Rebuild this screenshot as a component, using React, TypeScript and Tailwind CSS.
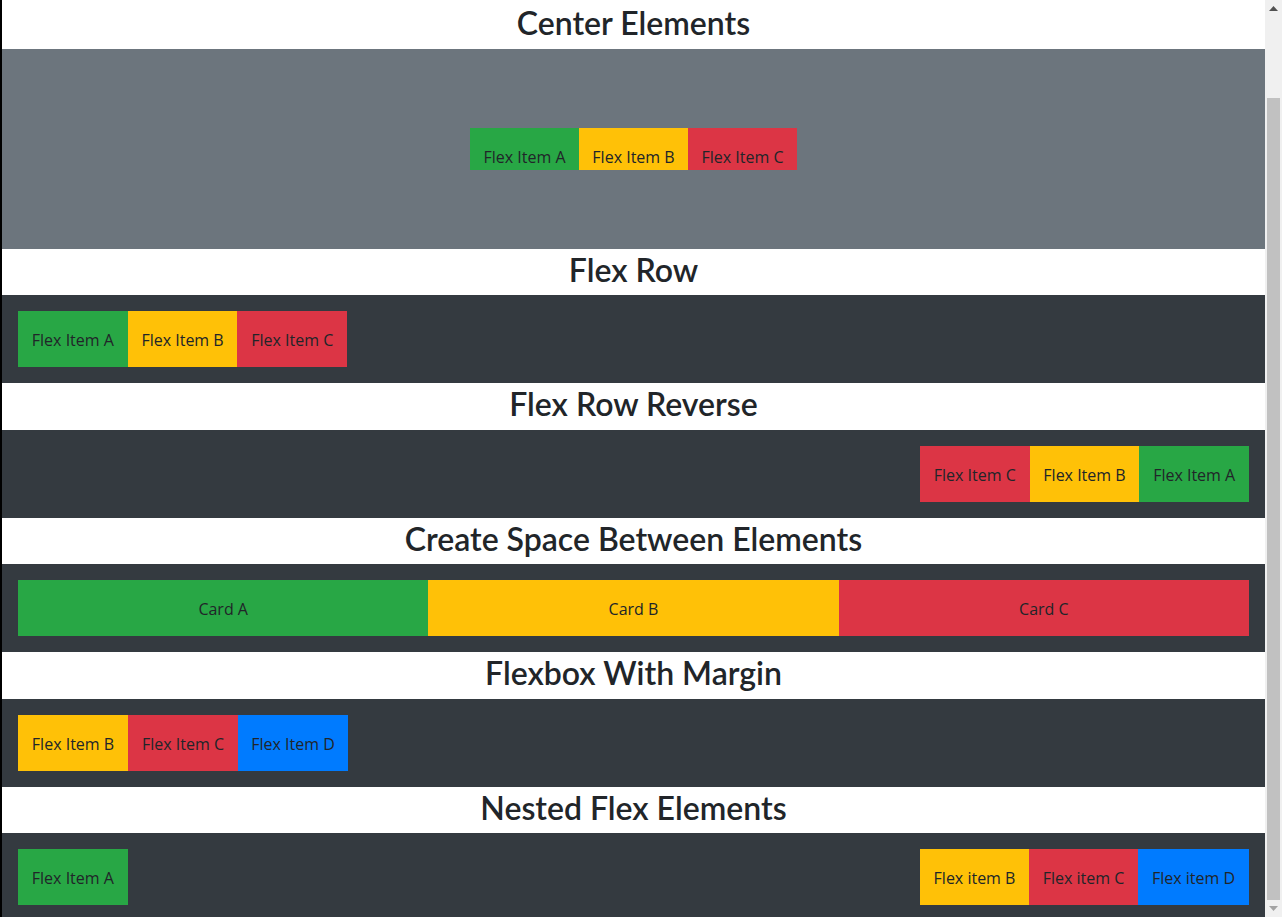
const FONT = "font-['Segoe_UI','Open_Sans','Noto_Sans',sans-serif]";
const HEAD_FONT = "font-['Lato','Open_Sans',sans-serif]";

const GREEN = "bg-[#28a745]";
const YELLOW = "bg-[#ffc107]";
const RED = "bg-[#dc3545]";
const BLUE = "bg-[#007bff]";

function Heading({ children, first }: { children: string; first?: boolean }) {
  return (
    <h2
      className={`${HEAD_FONT} bg-white text-center text-[32px] font-semibold leading-[38.4px] text-[#212529] ${
        first ? "h-[49px] pt-[3.5px]" : "h-[46.4px] pt-[2px]"
      }`}
    >
      {children}
    </h2>
  );
}

function Item({ label, color, w = "w-[109.7px]", clip }: { label: string; color: string; w?: string; clip?: boolean }) {
  return (
    <div
      className={`${color} ${w} shrink-0 overflow-hidden whitespace-nowrap pt-[17px] text-center text-base leading-6 text-[#212529] ${
        clip ? "h-[42px]" : "h-[56px]"
      }`}
    >
      {label}
    </div>
  );
}

function Dark({ children, className = "" }: { children: React.ReactNode; className?: string }) {
  return <div className={`flex h-[88px] bg-[#343a40] p-4 ${className}`}>{children}</div>;
}

function Scrollbar() {
  return (
    <div className="flex w-[17px] shrink-0 flex-col bg-[#f0f0f0]">
      <div className="flex h-[17px] items-center justify-center">
        <svg width="9" height="5" viewBox="0 0 9 5">
          <path d="M0 5 L4.5 0 L9 5 Z" fill="#505050" />
        </svg>
      </div>
      <div className="mx-[2px] mt-[81px] h-[802px] bg-[#c1c1c1]" />
      <div className="flex h-[17px] items-center justify-center">
        <svg width="9" height="5" viewBox="0 0 9 5">
          <path d="M0 0 L9 0 L4.5 5 Z" fill="#a3a3a3" />
        </svg>
      </div>
    </div>
  );
}

export default function App() {
  return (
    <div className={`flex h-[917px] overflow-hidden bg-white ${FONT}`}>
      <div className="w-[2px] shrink-0 bg-black" />

      <main className="min-w-0 flex-1">
        <Heading first>Center Elements</Heading>
        <div className="flex h-[200px] items-center justify-center bg-[#6c757d]">
          <Item label="Flex Item A" color={GREEN} w="w-[109px]" clip />
          <Item label="Flex Item B" color={YELLOW} w="w-[109px]" clip />
          <Item label="Flex Item C" color={RED} w="w-[109px]" clip />
        </div>

        <Heading>Flex Row</Heading>
        <Dark>
          <Item label="Flex Item A" color={GREEN} />
          <Item label="Flex Item B" color={YELLOW} />
          <Item label="Flex Item C" color={RED} />
        </Dark>

        <Heading>Flex Row Reverse</Heading>
        <Dark className="flex-row-reverse">
          <Item label="Flex Item A" color={GREEN} />
          <Item label="Flex Item B" color={YELLOW} />
          <Item label="Flex Item C" color={RED} />
        </Dark>

        <Heading>Create Space Between Elements</Heading>
        <Dark>
          <Item label="Card A" color={GREEN} w="flex-1" />
          <Item label="Card B" color={YELLOW} w="flex-1" />
          <Item label="Card C" color={RED} w="flex-1" />
        </Dark>

        <Heading>Flexbox With Margin</Heading>
        <Dark>
          <Item label="Flex Item B" color={YELLOW} w="w-[110px]" />
          <Item label="Flex Item C" color={RED} w="w-[110px]" />
          <Item label="Flex Item D" color={BLUE} w="w-[110px]" />
        </Dark>

        <Heading>Nested Flex Elements</Heading>
        <Dark className="justify-between">
          <Item label="Flex Item A" color={GREEN} />
          <div className="flex">
            <Item label="Flex item B" color={YELLOW} w="w-[109px]" />
            <Item label="Flex item C" color={RED} w="w-[109px]" />
            <Item label="Flex item D" color={BLUE} w="w-[111px]" />
          </div>
        </Dark>
      </main>

      <Scrollbar />
    </div>
  );
}
